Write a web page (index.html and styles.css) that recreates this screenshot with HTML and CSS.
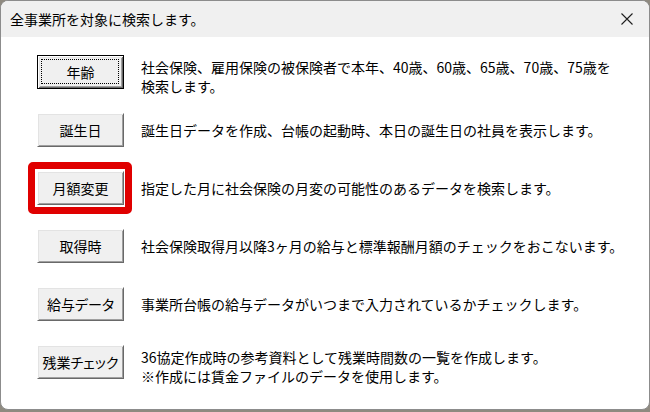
FILE: index.html
```html
<!DOCTYPE html>
<html lang="ja">
<head>
<meta charset="utf-8">
<title>全事業所を対象に検索します。</title>
<link rel="stylesheet" href="styles.css">
</head>
<body>
<div class="window">
  <div class="titlebar">
    <span class="title">全事業所を対象に検索します。</span>
    <span class="close" aria-label="閉じる">
      <svg width="12" height="12" viewBox="0 0 12 12"><path d="M0.5 0.5 L11.5 11.5 M11.5 0.5 L0.5 11.5" stroke="#1f1f1f" stroke-width="1.1" fill="none"/></svg>
    </span>
  </div>
  <div class="content">
    <div class="row row--multi">
      <button class="btn btn--default">年齢</button>
      <p class="desc">社会保険、雇用保険の被保険者で本年、40歳、60歳、65歳、70歳、75歳を<br>検索します。</p>
    </div>
    <div class="row">
      <button class="btn">誕生日</button>
      <p class="desc">誕生日データを作成、台帳の起動時、本日の誕生日の社員を表示します。</p>
    </div>
    <div class="row">
      <span class="highlight"><button class="btn">月額変更</button></span>
      <p class="desc">指定した月に社会保険の月変の可能性のあるデータを検索します。</p>
    </div>
    <div class="row">
      <button class="btn">取得時</button>
      <p class="desc">社会保険取得月以降3ヶ月の給与と標準報酬月額のチェックをおこないます。</p>
    </div>
    <div class="row">
      <button class="btn">給与データ</button>
      <p class="desc">事業所台帳の給与データがいつまで入力されているかチェックします。</p>
    </div>
    <div class="row row--multi">
      <button class="btn">残業チェック</button>
      <p class="desc">36協定作成時の参考資料として残業時間数の一覧を作成します。<br>※作成には賃金ファイルのデータを使用します。</p>
    </div>
  </div>
</div>
</body>
</html>
```
FILE: styles.css
```css
* { box-sizing: border-box; }
html, body {
  margin: 0;
  padding: 0;
  width: 650px;
  height: 412px;
  overflow: hidden;
  background: #8f8a80;
  font-family: "Noto Sans CJK JP", "Noto Sans", sans-serif;
  color: #000;
}
.window {
  width: 650px;
  height: 410px;
  background: #fff;
  border: 1px solid #8c8c8c;
  border-radius: 8px;
  overflow: hidden;
  display: flex;
  flex-direction: column;
}
.titlebar {
  height: 36px;
  background: #f0f0f0;
  display: flex;
  align-items: center;
  justify-content: space-between;
  padding: 0 16px 0 9px;
  flex: none;
}
.title {
  font-size: 14px;
  line-height: 20px;
  margin-top: -1px;
}
.close {
  display: flex;
  width: 12px;
  height: 12px;
  margin-top: -1px;
}
.content {
  display: flex;
  flex-direction: column;
  gap: 24px;
  padding: 18px 0 0 36px;
}
.row {
  display: flex;
  align-items: center;
  gap: 17px;
  height: 34px;
}
.row--multi {
  align-items: flex-start;
}
.row--multi .desc {
  padding-top: 3px;
}
.desc {
  margin: 0;
  font-size: 14px;
  line-height: 19px;
  white-space: nowrap;
}
.btn {
  position: relative;
  width: 87px;
  height: 34px;
  padding: 0;
  margin: 0;
  font-family: inherit;
  font-size: 14px;
  font-feature-settings: "palt";
  color: #000;
  background: #f0f0f0;
  border: 1px solid;
  border-color: #ffffff #696969 #696969 #ffffff;
  box-shadow: inset 1px 1px 0 #e3e3e3, inset -1px -1px 0 #a0a0a0;
  flex: none;
}
.btn--default {
  border-color: #000;
  box-shadow: inset 1px 1px 0 #ffffff, inset -1px -1px 0 #696969, inset 2px 2px 0 #e3e3e3, inset -2px -2px 0 #a0a0a0;
}
.btn--default::before {
  content: "";
  position: absolute;
  inset: 3px 4px 4px 3px;
  border: 1px dotted #000;
}
.highlight {
  position: relative;
  display: flex;
  flex: none;
}
.highlight::after {
  content: "";
  position: absolute;
  inset: -9px -8px -9px -9px;
  border: 7px solid #e00000;
  border-radius: 5px;
  pointer-events: none;
}
```
